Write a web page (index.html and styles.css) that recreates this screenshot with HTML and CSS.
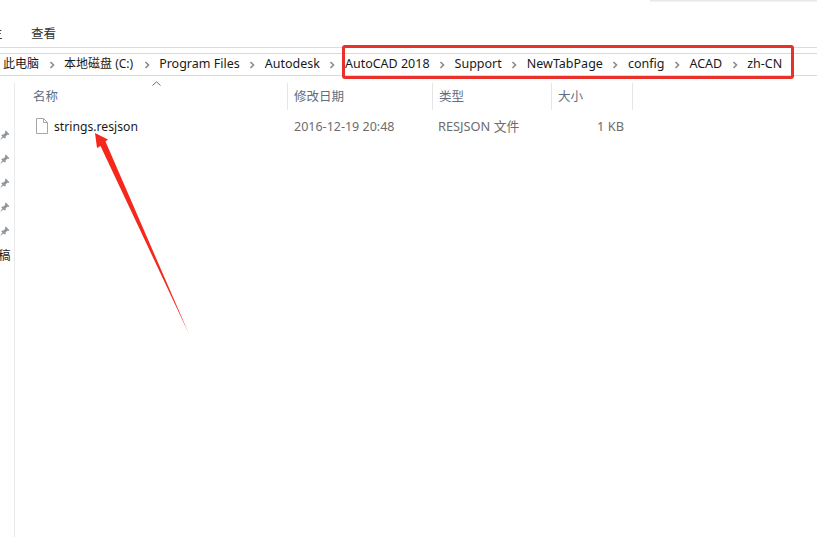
FILE: index.html
```html
<!DOCTYPE html>
<html lang="zh-CN">
<head>
<meta charset="utf-8">
<title>zh-CN</title>
<link rel="stylesheet" href="styles.css">
</head>
<body>
<div class="window">
  <header class="ribbon">
    <span class="tab tab-cut">主</span>
    <span class="tab tab-view">查看</span>
  </header>
  <nav class="address">
    <span class="crumb crumb-cjk">此电脑</span>
    <svg class="chev" viewBox="0 0 6 8"><path d="M1.5 1 L4.5 4 L1.5 7"/></svg>
    <span class="crumb crumb-cjk crumb-drive">本地磁盘 (C:)</span>
    <svg class="chev" viewBox="0 0 6 8"><path d="M1.5 1 L4.5 4 L1.5 7"/></svg>
    <span class="crumb">Program Files</span>
    <svg class="chev" viewBox="0 0 6 8"><path d="M1.5 1 L4.5 4 L1.5 7"/></svg>
    <span class="crumb">Autodesk</span>
    <svg class="chev" viewBox="0 0 6 8"><path d="M1.5 1 L4.5 4 L1.5 7"/></svg>
    <span class="crumb">AutoCAD 2018</span>
    <svg class="chev" viewBox="0 0 6 8"><path d="M1.5 1 L4.5 4 L1.5 7"/></svg>
    <span class="crumb">Support</span>
    <svg class="chev" viewBox="0 0 6 8"><path d="M1.5 1 L4.5 4 L1.5 7"/></svg>
    <span class="crumb">NewTabPage</span>
    <svg class="chev" viewBox="0 0 6 8"><path d="M1.5 1 L4.5 4 L1.5 7"/></svg>
    <span class="crumb">config</span>
    <svg class="chev" viewBox="0 0 6 8"><path d="M1.5 1 L4.5 4 L1.5 7"/></svg>
    <span class="crumb">ACAD</span>
    <svg class="chev" viewBox="0 0 6 8"><path d="M1.5 1 L4.5 4 L1.5 7"/></svg>
    <span class="crumb">zh-CN</span>
  </nav>
  <div class="body">
    <aside class="nav">
      <svg class="pin" viewBox="0 0 10 10"><path d="M5.8 0.6 L9.4 4.2 L8.4 5 L7.2 4.8 L5.6 6.4 L5.6 8 L4.6 8.6 L1.4 5.4 L2 4.4 L3.6 4.4 L5.2 2.8 L5 1.6 Z M2.6 6.4 L3.6 7.4 L0.8 9.6 L0.4 9.2 Z"/></svg>
      <svg class="pin" viewBox="0 0 10 10"><path d="M5.8 0.6 L9.4 4.2 L8.4 5 L7.2 4.8 L5.6 6.4 L5.6 8 L4.6 8.6 L1.4 5.4 L2 4.4 L3.6 4.4 L5.2 2.8 L5 1.6 Z M2.6 6.4 L3.6 7.4 L0.8 9.6 L0.4 9.2 Z"/></svg>
      <svg class="pin" viewBox="0 0 10 10"><path d="M5.8 0.6 L9.4 4.2 L8.4 5 L7.2 4.8 L5.6 6.4 L5.6 8 L4.6 8.6 L1.4 5.4 L2 4.4 L3.6 4.4 L5.2 2.8 L5 1.6 Z M2.6 6.4 L3.6 7.4 L0.8 9.6 L0.4 9.2 Z"/></svg>
      <svg class="pin" viewBox="0 0 10 10"><path d="M5.8 0.6 L9.4 4.2 L8.4 5 L7.2 4.8 L5.6 6.4 L5.6 8 L4.6 8.6 L1.4 5.4 L2 4.4 L3.6 4.4 L5.2 2.8 L5 1.6 Z M2.6 6.4 L3.6 7.4 L0.8 9.6 L0.4 9.2 Z"/></svg>
      <svg class="pin" viewBox="0 0 10 10"><path d="M5.8 0.6 L9.4 4.2 L8.4 5 L7.2 4.8 L5.6 6.4 L5.6 8 L4.6 8.6 L1.4 5.4 L2 4.4 L3.6 4.4 L5.2 2.8 L5 1.6 Z M2.6 6.4 L3.6 7.4 L0.8 9.6 L0.4 9.2 Z"/></svg>
      <span class="nav-label">稿</span>
    </aside>
    <main class="list">
      <div class="cols">
        <div class="col col-name">名称
          <svg class="sort" viewBox="0 0 9 5"><path d="M0.5 4.5 L4.5 0.8 L8.5 4.5"/></svg>
        </div>
        <div class="col col-date">修改日期</div>
        <div class="col col-type">类型</div>
        <div class="col col-size">大小</div>
      </div>
      <div class="row">
        <div class="cell col-name file">
          <svg class="file-icon" viewBox="0 0 12 16"><path class="file-sheet" d="M0.5 0.5 H7.5 L11.5 4.5 V15.5 H0.5 Z"/><path class="file-fold" d="M7.5 0.5 V4.5 H11.5"/></svg>
          <span class="file-name">strings.resjson</span>
        </div>
        <div class="cell col-date muted">2016-12-19 20:48</div>
        <div class="cell col-type muted type-value">RESJSON 文件</div>
        <div class="cell col-size muted size-value">1 KB</div>
      </div>
    </main>
  </div>
  <div class="shadow"></div>
  <div class="highlight"></div>
  <svg class="arrow" viewBox="0 0 817 537"><path d="M95 133 L108 139.5 L105.5 141.5 L189 334 L100.5 146 L97 148 Z"/></svg>
</div>
</body>
</html>
```
FILE: styles.css
```css
* { box-sizing: border-box; }
html, body { margin: 0; padding: 0; }
body {
  width: 817px;
  height: 537px;
  overflow: hidden;
  background: #fff;
  font-family: "Noto Sans", "Noto Sans CJK SC", sans-serif;
  font-size: 12.5px;
  color: #1e1e1e;
}
.window { position: relative; width: 817px; height: 537px; overflow: hidden; }
.ribbon {
  height: 48px;
  border-bottom: 1px solid #dcdcdc;
  display: flex;
  align-items: flex-start;
  padding-top: 25px;
}
.tab { line-height: 17px; color: #333; }
.tab-cut { width: 31px; margin-left: -10px; margin-right: 10px; }
.address {
  height: 23px;
  margin-top: 5px;
  border-top: 1px solid #d9d9d9;
  border-bottom: 1px solid #d9d9d9;
  display: flex;
  align-items: center;
  padding-left: 3px;
}
.crumb { white-space: nowrap; color: #1a1a1a; line-height: 17px; position: relative; top: -1px; }
.crumb-cjk { font-size: 12px; }
.crumb-drive { padding-right: 1px; }
.chev { width: 6px; height: 8px; margin: 0 9.5px; flex: none; }
.chev path { fill: none; stroke: #8a8a8a; stroke-width: 1.6; }
.body { display: flex; height: 461px; }
.nav {
  width: 15px;
  margin-top: 7px;
  border-right: 1px solid #eaeaea;
  display: flex;
  flex-direction: column;
  align-items: flex-start;
  padding: 47px 0 0 0;
  overflow: hidden;
}
.pin { width: 10px; height: 10px; margin-bottom: 14px; fill: #8f979e; flex: none; }
.nav-label { position: relative; left: -2px; margin-top: -3px; line-height: 17px; white-space: nowrap; }
.list { flex: 1; padding-top: 7px; }
.cols { display: flex; height: 27px; }
.col {
  position: relative;
  border-right: 1px solid #e5e5e5;
  padding: 5px 0 0 6px;
  color: #5f6d7e;
  line-height: 17px;
}
.col-name { width: 273px; padding-left: 18px; }
.col-date { width: 145px; }
.col-type { width: 119px; }
.col-size { width: 81px; }
.sort { position: absolute; left: 137px; top: -2px; width: 9px; height: 5px; }
.sort path { fill: none; stroke: #6f6f6f; stroke-width: 1; }
.row { display: flex; height: 22px; margin-top: 5px; align-items: center; }
.cell { padding-left: 6px; white-space: nowrap; line-height: 17px; }
.file { display: flex; align-items: center; padding-left: 21px; gap: 6px; color: #1a1a1a; }
.file-name { font-size: 12.2px; }
.file-icon { width: 12px; height: 16px; flex: none; }
.file-sheet { fill: #fff; stroke: #a6a6a6; }
.file-fold { fill: none; stroke: #a6a6a6; }
.muted { color: #6d6d6d; }
.type-value { padding-left: 5px; font-size: 12.8px; }
.size-value { text-align: right; padding-right: 9px; font-size: 12.8px; }
.shadow {
  position: absolute;
  right: 0;
  top: 0;
  width: 167px;
  height: 2px;
  background: linear-gradient(#e4e4e4, #f8f8f8);
}
.highlight {
  position: absolute;
  left: 342px;
  top: 45px;
  width: 452px;
  height: 34px;
  border: 3px solid #e9302a;
  border-radius: 3px;
}
.arrow { position: absolute; left: 0; top: 0; width: 817px; height: 537px; }
.arrow path { fill: #f5281e; }
```
